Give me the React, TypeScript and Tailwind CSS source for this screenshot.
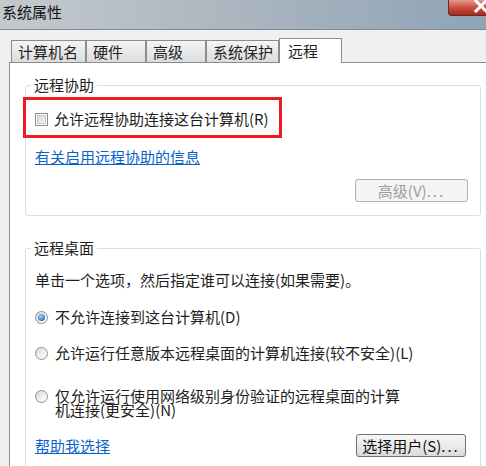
import React from 'react'

const tabs = [
  { label: '计算机名', w: 'w-[75px]' },
  { label: '硬件', w: 'w-[60px]' },
  { label: '高级', w: 'w-[60px]' },
  { label: '系统保护', w: 'w-[73px]' },
]

function Radio({ checked }: { checked?: boolean }) {
  return (
    <span className="flex h-[13px] w-[13px] shrink-0 items-center justify-center rounded-full border border-[#8c8f93] bg-linear-to-br from-[#d6d6d6] via-[#eeeeee] to-white">
      {checked && (
        <span className="h-[7px] w-[7px] rounded-full bg-[radial-gradient(circle_at_40%_35%,#a8d8ff,#1e6cc2_75%)]" />
      )}
    </span>
  )
}

function Checkbox() {
  return (
    <span className="flex h-[13px] w-[13px] shrink-0 items-center justify-center border border-[#8e8f8f] bg-white">
      <span className="h-[9px] w-[9px] border border-[#c9c9c9] bg-linear-to-br from-[#d8d8d8] to-[#f6f6f6]" />
    </span>
  )
}

export default function App() {
  return (
    <div className="flex h-[466px] w-[486px] flex-col overflow-hidden bg-[#f0f0f0] font-['Noto_Sans_CJK_SC','Noto_Sans',sans-serif] text-[15px] text-[#1e1e1e]">
      {/* title bar */}
      <div className="flex h-[30px] shrink-0 items-start justify-between border-b border-[#7f8c98] bg-linear-to-r from-[#c4c9ce] via-[#aab5bf] to-[#8fa4b6]">
        <span className="pl-[2px] pt-[3px] text-[15px] leading-[17px] text-[#111]">系统属性</span>
        <div className="flex h-[16px] w-[38px] items-start justify-end overflow-hidden rounded-bl-[4px] border-b border-l border-[#6b2a22] bg-linear-to-b from-[#e3988c] via-[#c9503f] to-[#a8291a]">
          <svg width="16" height="13" viewBox="0 0 16 13" className="-mr-[3px] shrink-0">
            <path d="M3 1 L13 11 M13 1 L3 11" stroke="#fff" strokeWidth="3" strokeLinecap="square" />
          </svg>
        </div>
      </div>

      {/* body */}
      <div className="flex flex-1 flex-col pl-[9px] pt-[8px]">
        <div className="relative z-10 flex h-[24px] items-end pl-[2px]">
          {tabs.map(t => (
            <div key={t.label} className={`${t.w} h-[22px] border-x border-t border-[#898c95] bg-linear-to-b from-[#f5f5f5] to-[#dcdcdc] pl-[6px] leading-[22px]`}>
              {t.label}
            </div>
          ))}
          <div className="-mb-px h-[25px] w-[63px] border-x border-t border-[#898c95] bg-white pl-[8px] leading-[23px]">远程</div>
        </div>

        <div className="flex-1 border-l border-t border-[#898c95] bg-white pl-[15px]">
          {/* 远程协助 */}
          <fieldset className="mt-[14px] w-[456px] rounded-[3px] border border-[#d5dfe5] pb-[13px]">
            <legend className="ml-[5px] px-[3px] leading-[16px]">远程协助</legend>
            <div className="flex flex-col">
              <div className="relative ml-[9px] mt-[17px] flex h-[18px] items-center gap-[6px] leading-[18px]">
                <div className="absolute -left-[12px] -top-[13px] h-[41px] w-[259px] border-[3px] border-[#ee1c1c]" />
                <Checkbox />
                <span>允许远程协助连接这台计算机(R)</span>
              </div>
              <a className="ml-[9px] mt-[20px] self-start leading-[18px] text-[#0a64c8] underline">有关启用远程协助的信息</a>
              <button className="mr-[12px] mt-[13px] h-[23px] w-[113px] self-end rounded-[3px] border border-[#adb2b5] bg-[#f4f4f4] leading-[21px] text-[#9c9c9c]">
                高级(V)<span className="tracking-[2px]">...</span>
              </button>
            </div>
          </fieldset>

          {/* 远程桌面 */}
          <fieldset className="mt-[24px] w-[456px] rounded-[3px] border border-[#d5dfe5] pb-[13px]">
            <legend className="ml-[5px] px-[3px] leading-[16px]">远程桌面</legend>
            <div className="flex flex-col pl-[9px]">
              <p className="mt-[15px] leading-[18px]">单击一个选项，然后指定谁可以连接(如果需要)。</p>
              <label className="mt-[19px] flex items-center gap-[7px] leading-[18px]">
                <Radio checked />
                <span>不允许连接到这台计算机(D)</span>
              </label>
              <label className="mt-[18px] flex items-center gap-[7px] leading-[18px]">
                <Radio />
                <span>允许运行任意版本远程桌面的计算机连接(较不安全)(L)</span>
              </label>
              <label className="mt-[27px] flex items-start gap-[7px]">
                <span className="mt-[1px]">
                  <Radio />
                </span>
                <span className="w-[350px] leading-[14px]">仅允许运行使用网络级别身份验证的远程桌面的计算机连接(更安全)(N)</span>
              </label>
              <div className="mt-[17px] flex items-center justify-between pr-[14px]">
                <a className="leading-[18px] text-[#0a64c8] underline">帮助我选择</a>
                <button className="h-[23px] w-[110px] rounded-[3px] border border-[#707070] bg-linear-to-b from-[#f6f6f6] via-[#ebebeb] to-[#dadada] leading-[21px] text-[#111]">
                  选择用户(S)<span className="tracking-[2px]">...</span>
                </button>
              </div>
            </div>
          </fieldset>
        </div>
      </div>
    </div>
  )
}
